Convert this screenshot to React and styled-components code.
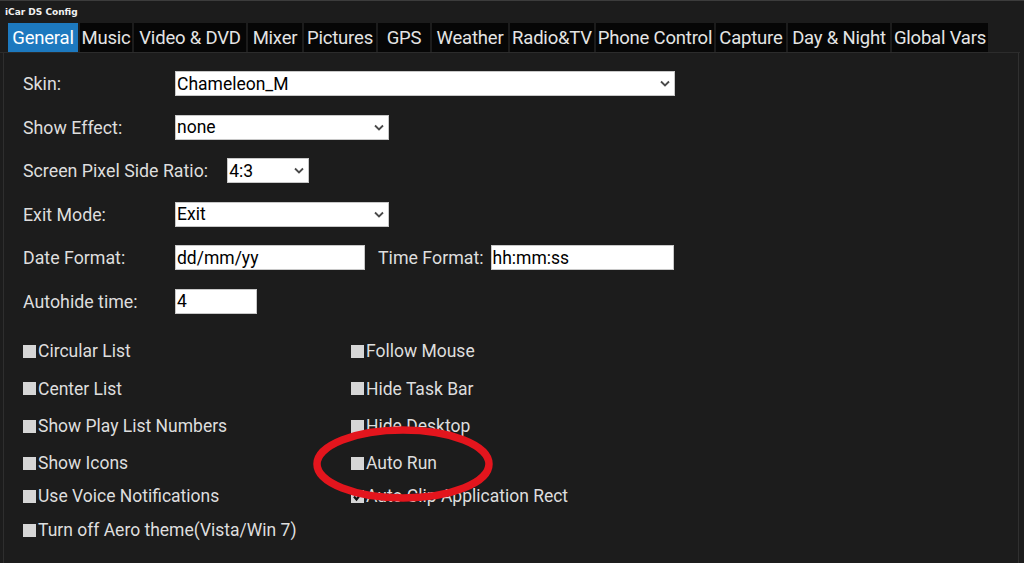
import React from 'react'
import styled, { createGlobalStyle } from 'styled-components'

const GlobalStyle = createGlobalStyle`
  html, body {
    margin: 0;
    padding: 0;
    background: #1c1c1c;
  }
  body {
    font-family: Roboto, "Liberation Sans", sans-serif;
    color: #dedede;
  }
`

const tabs = [
  { name: 'General', width: 70, active: true },
  { name: 'Music', width: 52 },
  { name: 'Video & DVD', width: 112 },
  { name: 'Mixer', width: 54 },
  { name: 'Pictures', width: 72 },
  { name: 'GPS', width: 52 },
  { name: 'Weather', width: 76 },
  { name: 'Radio&TV', width: 84 },
  { name: 'Phone Control', width: 118 },
  { name: 'Capture', width: 70 },
  { name: 'Day & Night', width: 102 },
  { name: 'Global Vars', width: 96 }
]

const leftChecks = [
  { label: 'Circular List' },
  { label: 'Center List' },
  { label: 'Show Play List Numbers' },
  { label: 'Show Icons' },
  { label: 'Use Voice Notifications' },
  { label: 'Turn off Aero theme(Vista/Win 7)' }
]

const rightChecks = [
  { label: 'Follow Mouse' },
  { label: 'Hide Task Bar' },
  { label: 'Hide Desktop' },
  { label: 'Auto Run' },
  { label: 'Auto Clip Application Rect', checked: true }
]

const Chevron = () => (
  <svg width='10' height='7' viewBox='0 0 10 7'>
    <path d='M1 1.5 L5 5.5 L9 1.5' fill='none' stroke='#4a4a4a' strokeWidth='1.8' />
  </svg>
)

const Tick = () => (
  <svg width='11' height='11' viewBox='0 0 11 11'>
    <path d='M2 5.5 L4.5 8.5 L9.5 2' fill='none' stroke='#111' strokeWidth='2.2' />
  </svg>
)

export default function App () {
  return (
    <Window>
      <GlobalStyle />
      <TitleBar>iCar DS Config</TitleBar>
      <TabStrip>
        {tabs.map(t => (
          <Tab key={t.name} $width={t.width} $active={t.active}>{t.name}</Tab>
        ))}
      </TabStrip>
      <Panel>
        <Form>
          <Row>
            <Label>Skin:</Label>
            <Select $width={500}>Chameleon_M<Chevron /></Select>
          </Row>
          <Row>
            <Label>Show Effect:</Label>
            <Select $width={214}>none<Chevron /></Select>
          </Row>
          <Row>
            <Label>Screen Pixel Side Ratio:</Label>
            <Select $width={82}>4:3<Chevron /></Select>
          </Row>
          <Row>
            <Label>Exit Mode:</Label>
            <Select $width={214}>Exit<Chevron /></Select>
          </Row>
          <Row>
            <Label>Date Format:</Label>
            <TextBox $width={190}>dd/mm/yy</TextBox>
            <InlineLabel>Time Format:</InlineLabel>
            <TextBox $width={183}>hh:mm:ss</TextBox>
          </Row>
          <Row>
            <Label>Autohide time:</Label>
            <TextBox $width={82}>4</TextBox>
          </Row>
        </Form>
        <Checks>
          <CheckColumn>
            {leftChecks.map(c => (
              <CheckRow key={c.label}>
                <Box />{c.label}
              </CheckRow>
            ))}
          </CheckColumn>
          <CheckColumn>
            {rightChecks.map(c => (
              <CheckRow key={c.label}>
                <Box>{c.checked && <Tick />}</Box>{c.label}
              </CheckRow>
            ))}
          </CheckColumn>
          <Highlight width='190' height='80' viewBox='0 0 190 80'>
            <ellipse cx='95' cy='40' rx='86' ry='34' fill='none' stroke='#e3151d' strokeWidth='7.5' />
          </Highlight>
        </Checks>
      </Panel>
    </Window>
  )
}

const Window = styled.div`
  height: 100vh;
  display: flex;
  flex-direction: column;
  box-sizing: border-box;
  border-top: 1px solid #3c3c3c;
  background: #1c1c1c;
  overflow: hidden;
`
const TitleBar = styled.div`
  height: 22px;
  padding-left: 5px;
  display: flex;
  align-items: center;
  font-family: Tahoma, "DejaVu Sans", sans-serif;
  font-weight: bold;
  font-size: 9px;
  color: #f2f2f2;
`
const TabStrip = styled.div`
  display: flex;
  gap: 2px;
  height: 29px;
  padding-left: 8px;
  border-bottom: 1px solid #2c2c2c;
  margin-right: 4px;
`
const Tab = styled.div`
  width: ${p => p.$width}px;
  display: flex;
  align-items: center;
  justify-content: center;
  background: ${p => p.$active ? '#1d79bf' : '#060606'};
  color: ${p => p.$active ? '#ffffff' : '#e4e4e4'};
  font-size: 18.5px;
  letter-spacing: -0.2px;
  white-space: nowrap;
`
const Panel = styled.div`
  flex: 1;
  margin: 0 5px 0 3px;
  border-left: 1px solid #2e2e2e;
  border-right: 1px solid #303030;
  padding: 18px 0 0 19px;
`
const Form = styled.div`
  display: flex;
  flex-direction: column;
  gap: 18.6px;
`
const Row = styled.div`
  display: flex;
  align-items: center;
  height: 25px;
`
const Label = styled.div`
  min-width: 133px;
  margin-right: 19px;
  font-size: 17.8px;
  white-space: nowrap;
`
const InlineLabel = styled.div`
  margin: 0 7px 0 13px;
  font-size: 17.8px;
`
const TextBox = styled.div`
  box-sizing: border-box;
  width: ${p => p.$width}px;
  height: 25px;
  background: #ffffff;
  border: 1px solid #c8c8c8;
  color: #000;
  font-size: 17.5px;
  padding-left: 1px;
  display: flex;
  align-items: center;
`
const Select = styled(TextBox)`
  justify-content: space-between;
  padding-right: 4px;
`
const Checks = styled.div`
  position: relative;
  display: grid;
  grid-template-columns: 328px 1fr;
  margin-top: 19px;
`
const CheckColumn = styled.div`
  display: grid;
  grid-template-rows: 37px 38px 37px 37px 29px 39px;
`
const CheckRow = styled.div`
  display: flex;
  align-items: center;
  font-size: 17.5px;
  white-space: nowrap;
`
const Box = styled.span`
  width: 13px;
  height: 13px;
  margin-right: 2px;
  background: #d6d6d6;
  display: inline-flex;
  align-items: center;
  justify-content: center;
`
const Highlight = styled.svg`
  position: absolute;
  left: 285px;
  top: 91px;
  pointer-events: none;
`
